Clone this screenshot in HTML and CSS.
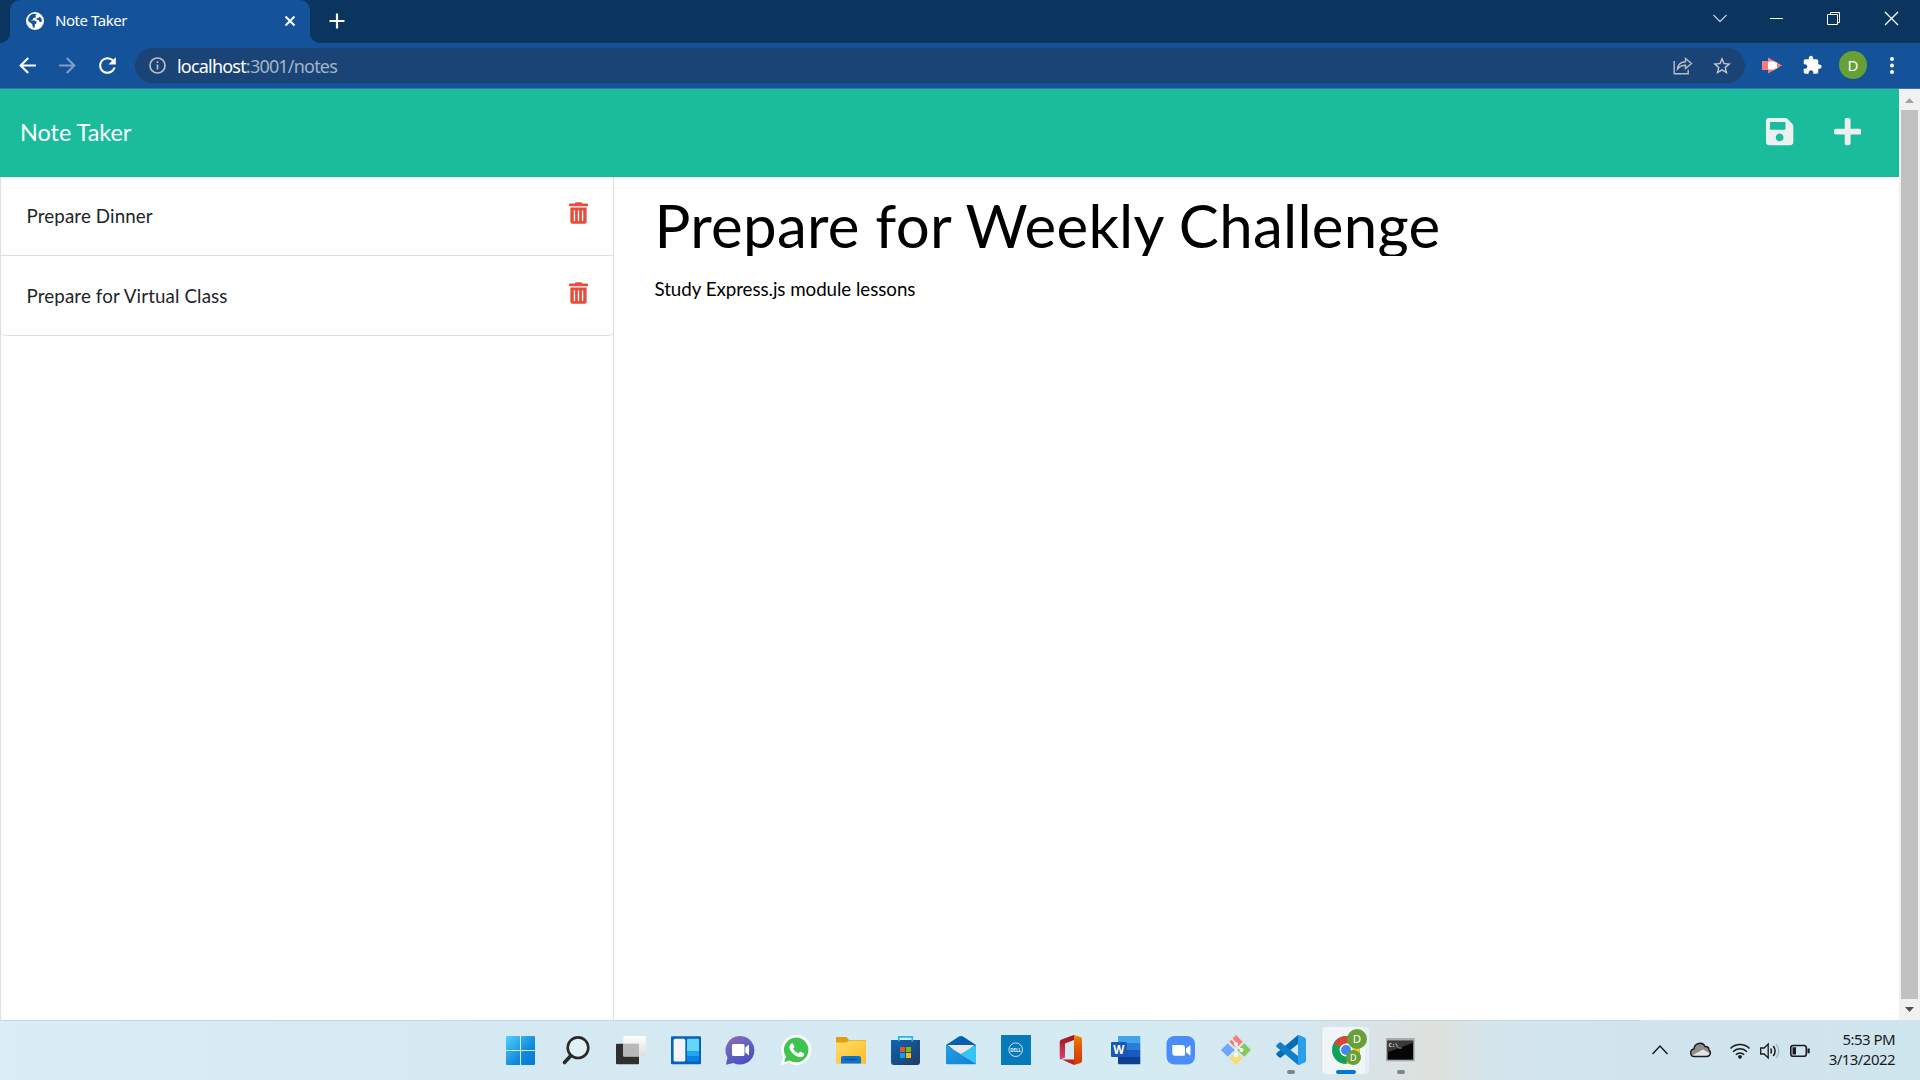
FILE: index.html
```html
<!DOCTYPE html>
<html lang="en">
<head>
<meta charset="utf-8">
<title>Note Taker</title>
<link rel="stylesheet" href="styles.css">
</head>
<body>
<header class="tabstrip">
  <div class="tab-edge"></div>
  <div class="tab">
    <svg class="globe" viewBox="0 0 18 18"><circle cx="9" cy="9" r="9" fill="#fff"/><path d="M7.6 1.8 11 2.2 9.4 3.6 10 5.4 7.3 6 7 7.6 4.6 8.4 8.6 8.6 10.6 9.8 10.3 11.6 8.8 12.6 8.6 15.8 6.8 15.4 6.4 12.8 5.4 11.4 2.2 8.9C2 5.4 4.4 2.4 7.6 1.8ZM13.8 4.4l2 3-.4 2.8-1.8-.4-1.2-1.7-2.1-.6.6-1.4 1.9-.3Z" fill="#14539a"/></svg>
    <span class="tab-title">Note Taker</span>
    <svg class="tab-close" viewBox="0 0 12 12"><path d="M1.5 1.5l9 9M10.5 1.5l-9 9" stroke="#fff" stroke-width="2"/></svg>
  </div>
  <div class="tab-edge tab-edge-right"></div>
  <svg class="new-tab" viewBox="0 0 16 16"><path d="M8 .5v15M.5 8h15" stroke="#fff" stroke-width="2.2"/></svg>
  <svg class="window-controls" viewBox="0 0 207 43" fill="none" stroke="#fff" stroke-width="1"><path d="M.5 15l6.500 6.500 6.500-6.500" stroke="#b9c8da" stroke-width="1.300"/><path d="M57 18.500h13"/><path d="M114.500 14.500h10v10h-10zM117.500 14.500v-2h9v10h-2"/><path d="M172 12l13 13M185 12l-13 13" stroke-width="1.300"/></svg>
</header>
<div class="toolbar">
  <svg class="nav-btn" viewBox="0 0 24 24"><path d="M20 11H7.830l5.590-5.590L12 4l-8 8 8 8 1.410-1.410L7.830 13H20z"/></svg>
  <svg class="nav-btn dim" viewBox="0 0 24 24"><path d="M4 11h12.170l-5.590-5.590L12 4l8 8-8 8-1.410-1.410L16.170 13H4z"/></svg>
  <svg class="nav-btn" viewBox="0 0 24 24"><path d="M17.650 6.350C16.200 4.900 14.210 4 12 4c-4.420 0-7.990 3.580-7.990 8s3.570 8 7.990 8c3.730 0 6.840-2.550 7.730-6h-2.080c-.82 2.330-3.040 4-5.650 4-3.310 0-6-2.690-6-6s2.690-6 6-6c1.660 0 3.140.690 4.220 1.780L13 11h7V4l-2.350 2.350z"/></svg>
  <div class="omnibox">
    <svg class="info" viewBox="0 0 17 17" fill="none" stroke="#b9bcc0" stroke-width="1.700"><circle cx="8.500" cy="8.500" r="7.500"/><path d="M8.500 7.500v5M8.500 4.300v1.800"/></svg>
    <span class="url">localhost<span class="url-path">:3001/notes</span></span>
    <svg class="share" viewBox="0 0 20 18" fill="none" stroke="#b9bec6" stroke-width="1.400"><path d="M1.200 4v12.800h14v-4"/><path d="M4.500 12C5 7.500 8 5 12.500 4.800V1.500L18.500 6.500 12.500 11.500V8.300C9 8.300 6.500 9.500 4.500 12Z"/></svg>
    <svg class="star" viewBox="2 2 20 19"><path fill="#c3c5c9" d="M22 9.240l-7.190-.620L12 2 9.190 8.630 2 9.240l5.460 4.730L5.820 21 12 17.270 18.180 21l-1.630-7.030L22 9.240zM12 15.400l-3.760 2.270 1-4.280-3.320-2.880 4.380-.380L12 6.100l1.710 4.040 4.380.380-3.320 2.880 1 4.280L12 15.400z"/></svg>
  </div>
  <svg class="ext" viewBox="0 0 20 17"><path d="M0 4h6V.500L20 8.500 6 16.500V13H0z" fill="#fb7a7c"/><rect x="6" y="4.500" width="7.500" height="8" rx="1" fill="#fff"/><path d="M11 8.500l4-3.500v7z" fill="#fff"/></svg>
  <svg class="puzzle" viewBox="0 0 24 24"><path fill="#fff" d="M20.500 11H19V7c0-1.100-.9-2-2-2h-4V3.500C13 2.120 11.880 1 10.500 1S8 2.120 8 3.500V5H4c-1.100 0-1.990.9-1.990 2v3.800H3.500c1.490 0 2.700 1.210 2.700 2.700s-1.210 2.700-2.700 2.700H2V20c0 1.100.9 2 2 2h3.800v-1.500c0-1.490 1.210-2.700 2.700-2.700s2.700 1.210 2.700 2.700V22H17c1.100 0 2-.9 2-2v-4h1.500c1.380 0 2.500-1.120 2.500-2.500S21.880 11 20.500 11z"/></svg>
  <div class="avatar">D</div>
  <svg class="menu" viewBox="0 0 4 17" fill="#fff"><circle cx="2" cy="2" r="2"/><circle cx="2" cy="8.500" r="2"/><circle cx="2" cy="15" r="2"/></svg>
</div>
<div class="viewport">
  <div class="page">
    <nav class="navbar">
      <span class="brand">Note Taker</span>
      <svg class="nav-icon" viewBox="0 0 448 512"><path d="M433.941 129.941l-83.882-83.882A48 48 0 0 0 316.118 32H48C21.490 32 0 53.490 0 80v352c0 26.510 21.490 48 48 48h352c26.510 0 48-21.490 48-48V163.882a48 48 0 0 0-14.059-33.941zM224 416c-35.346 0-64-28.654-64-64s28.654-64 64-64 64 28.654 64 64-28.654 64-64 64zm96-304.520V212c0 6.627-5.373 12-12 12H76c-6.627 0-12-5.373-12-12V108c0-6.627 5.373-12 12-12h228.520c3.183 0 6.235 1.264 8.485 3.515l3.480 3.480A11.996 11.996 0 0 1 320 111.480z"/></svg>
      <svg class="nav-icon" viewBox="0 0 448 512"><path d="M416 208H272V64c0-17.670-14.330-32-32-32h-32c-17.670 0-32 14.330-32 32v144H32c-17.670 0-32 14.330-32 32v32c0 17.670 14.330 32 32 32h144v144c0 17.670 14.330 32 32 32h32c17.670 0 32-14.330 32-32V304h144c17.670 0 32-14.330 32-32v-32c0-17.670-14.330-32-32-32z"/></svg>
    </nav>
    <main class="content">
      <aside class="notes">
        <ul class="note-list">
          <li class="note"><span class="note-title">Prepare Dinner</span><svg class="trash" viewBox="0 0 448 512"><path d="M32 464a48 48 0 0 0 48 48h288a48 48 0 0 0 48-48V128H32zm272-256a16 16 0 0 1 32 0v224a16 16 0 0 1-32 0zm-96 0a16 16 0 0 1 32 0v224a16 16 0 0 1-32 0zm-96 0a16 16 0 0 1 32 0v224a16 16 0 0 1-32 0zM432 32H312l-9.400-18.700A24 24 0 0 0 281.100 0H166.800a23.720 23.720 0 0 0-21.400 13.300L136 32H16A16 16 0 0 0 0 48v32a16 16 0 0 0 16 16h416a16 16 0 0 0 16-16V48a16 16 0 0 0-16-16z"/></svg></li>
          <li class="note"><span class="note-title">Prepare for Virtual Class</span><svg class="trash" viewBox="0 0 448 512"><path d="M32 464a48 48 0 0 0 48 48h288a48 48 0 0 0 48-48V128H32zm272-256a16 16 0 0 1 32 0v224a16 16 0 0 1-32 0zm-96 0a16 16 0 0 1 32 0v224a16 16 0 0 1-32 0zm-96 0a16 16 0 0 1 32 0v224a16 16 0 0 1-32 0zM432 32H312l-9.400-18.700A24 24 0 0 0 281.100 0H166.800a23.720 23.720 0 0 0-21.400 13.300L136 32H16A16 16 0 0 0 0 48v32a16 16 0 0 0 16 16h416a16 16 0 0 0 16-16V48a16 16 0 0 0-16-16z"/></svg></li>
        </ul>
      </aside>
      <section class="editor">
        <div class="editor-title">Prepare for Weekly Challenge</div>
        <div class="editor-text">Study Express.js module lessons</div>
      </section>
    </main>
  </div>
  <div class="scrollbar">
    <svg class="sb-arrow" viewBox="0 0 21 21"><path d="M6 14h9l-4.500-5z" fill="#a3a3a3"/></svg>
    <div class="thumb"></div>
    <svg class="sb-arrow" viewBox="0 0 21 21"><path d="M6 8h9l-4.500 5z" fill="#505050"/></svg>
  </div>
</div>
<footer class="taskbar">
  <div class="apps">
    <svg class="app" viewBox="0 0 55 59"><defs><linearGradient id="win" x1="13" y1="15" x2="42" y2="44" gradientUnits="userSpaceOnUse"><stop offset="0" stop-color="#4fd3fd"/><stop offset=".6" stop-color="#128ade"/><stop offset="1" stop-color="#0078d4"/></linearGradient></defs><path fill="url(#win)" d="M14 15h13v14H13V16q0-1 1-1zM28 15h13q1 0 1 1v13H28zM13 30h14v14H14q-1 0-1-1zM28 30h14v13q0 1-1 1H28z"/></svg>
    <svg class="app" viewBox="0 0 55 59" fill="none" stroke="#2b2a29"><circle cx="30" cy="26.700" r="10.300" fill="#dff0f7" stroke-width="2.600"/><path d="M22.500 35 16.500 41.500" stroke-width="3.600" stroke-linecap="round"/></svg>
    <svg class="app" viewBox="0 0 55 59"><defs><linearGradient id="tv" x1="0" y1="0" x2="0" y2="1"><stop offset="0" stop-color="#fff"/><stop offset="1" stop-color="#ddd"/></linearGradient></defs><rect x="13" y="22.700" width="23" height="20.600" rx="1" fill="#2f2f2e"/><rect x="20.300" y="15" width="22.500" height="20.500" rx="1" fill="url(#tv)"/><path d="M20.300 22.700H36v12.800H20.300z" fill="#b9b9b9"/></svg>
    <svg class="app" viewBox="0 0 55 59"><rect x="13" y="15.300" width="30" height="28" rx="1" fill="#0a62b8"/><rect x="15.600" y="17.700" width="11.700" height="22.800" rx="1.500" fill="#f4f4f6"/><path d="M29 19q0-1.300 1.300-1.300h9.400q1.300 0 1.300 1.300v11.400H29z" fill="#66d6fb"/><path d="M29 30.400h12V35H29z" fill="#1fa5f5"/><path d="M29 35h12v4.300q0 1.200-1.300 1.200h-9.400Q29 40.500 29 39.300z" fill="#0884e8"/></svg>
    <svg class="app" viewBox="0 0 55 59"><defs><linearGradient id="chat" x1="0" y1="0" x2=".6" y2="1"><stop offset="0" stop-color="#9a6aa8"/><stop offset=".4" stop-color="#6c66bd"/><stop offset="1" stop-color="#4c4fc0"/></linearGradient></defs><path fill="url(#chat)" d="M27.500 15a14.300 14.300 0 1 1-7 27L13 43.700l1.500-7.200A14.300 14.300 0 0 1 27.500 15z"/><rect x="19" y="23" width="12.500" height="12" rx="1.500" fill="#fff"/><path d="M32.300 26.500 36 23.500v11l-3.700-3z" fill="#fff"/></svg>
    <svg class="app" viewBox="0 0 55 59"><path fill="#fff" d="M28.100 14a15 15 0 1 1-7.200 28L13 44l2.200-7.800A15 15 0 0 1 28.100 14z"/><path fill="#40c351" d="M28.100 16.500a12.400 12.400 0 1 1-6.300 23.100L16.300 41l1.600-5.400A12.400 12.400 0 0 1 28.100 16.500z"/><path fill="#fff" d="M23.300 22.500c1-.5 1.700-.2 2 .7l1 2.500c.2.700-.3 1.400-1.200 2.100 1.300 2.300 3 3.700 5.500 4.700 1-1.300 1.500-2 2.500-1.500l2.500 1.300c1 .7.300 2.500-.6 3.200-2.100 1.600-4.900.6-7.600-.9-2.400-1.400-4.500-4-5.600-6.300-.8-2-.3-4.600 1.500-5.800z"/></svg>
    <svg class="app" viewBox="0 0 55 59"><defs><linearGradient id="fold" x1="0" y1="0" x2="1" y2="1"><stop offset="0" stop-color="#ffdc6b"/><stop offset="1" stop-color="#fbbd26"/></linearGradient></defs><path d="M13 17q0-1 1-1h9.500l2.500 3h16q1 0 1 1v5H13z" fill="#dfa00c"/><path d="M13 21.500h10.500l2.500-2h17V42q0 .8-1 .8H14q-1 0-1-.8z" fill="url(#fold)"/><path d="M18 42.500V37q0-2 2-2h16q2 0 2 2v5.500z" fill="#0b74cf"/><path d="M21.500 38.500h13" stroke="#0a4c95" stroke-width="1.300"/></svg>
    <svg class="app" viewBox="0 0 55 59"><defs><linearGradient id="store" x1="0" y1="0" x2="1" y2="1"><stop offset="0" stop-color="#0a66b5"/><stop offset="1" stop-color="#233a63"/></linearGradient></defs><path d="M13 19h29v22q0 3-3 3H16q-3 0-3-3z" fill="url(#store)"/><path d="M20.800 20.500v-4.700h13.500v4.700" fill="none" stroke="#22b7ee" stroke-width="1.700"/><path d="M22 26h5v5h-5z" fill="#f1511b"/><path d="M28 26h5v5h-5z" fill="#80bb01"/><path d="M22 32h5v5h-5z" fill="#02a5ee"/><path d="M28 32h5v5h-5z" fill="#fdb903"/></svg>
    <svg class="app" viewBox="0 0 55 59"><defs><linearGradient id="mail" x1="0" y1="0" x2="1" y2="1"><stop offset="0" stop-color="#1f9fe6"/><stop offset="1" stop-color="#1380d6"/></linearGradient></defs><path d="M13 24 26 15.500q2-1 4 0L43 24v4H13z" fill="#075fb2"/><path d="M14.500 24h27L29 35z" fill="#ebe9ea"/><path d="M13 24l30 18.500q0 .8-1 .8H14q-1 0-1-.8z" fill="url(#mail)"/><path d="M43 24v18.500L27.500 33z" fill="#32c5f3"/></svg>
    <svg class="app" viewBox="0 0 55 59"><path d="M13 14h30v30H13z" fill="#0679b8"/><circle cx="27.700" cy="28.700" r="6.800" fill="none" stroke="#cfe6f2" stroke-width="1"/><text x="27.700" y="30.500" text-anchor="middle" class="dell">DELL</text></svg>
    <svg class="app" viewBox="0 0 55 59"><defs><linearGradient id="off" x1="0" y1="0" x2="0" y2="1"><stop offset="0" stop-color="#991117"/><stop offset=".6" stop-color="#c83050"/><stop offset="1" stop-color="#d7406a"/></linearGradient><linearGradient id="off2" x1="0" y1="0" x2="0" y2="1"><stop offset="0" stop-color="#f08a00"/><stop offset=".4" stop-color="#e3560b"/><stop offset="1" stop-color="#cf3b04"/></linearGradient></defs><path d="M31 14 18.500 18.600q-1.800.8-1.800 2.700V37q0 2 1.800 1.300l3.500-2V22.500L31 19z" fill="url(#off)"/><path d="M31 14l6.500 2q1.500.5 1.500 2v22q0 1.500-1.500 2L31 44z" fill="url(#off2)"/><path d="M19 38.500h12V44z" fill="#c51f28"/></svg>
    <svg class="app" viewBox="0 0 55 59"><path d="M20 22v-6q0-1 1-1h20.300q1 0 1 1v6z" fill="#41a5ee"/><path d="M20 22h22.300v7H20z" fill="#2b7cd3"/><path d="M20 29h22.300v7H20z" fill="#185abd"/><path d="M20 36h22.300v6.300q0 1-1 1H21q-1 0-1-1z" fill="#103f91"/><rect x="13" y="21" width="15.700" height="15" rx="1" fill="#1857b8"/><text x="20.800" y="32.700" text-anchor="middle" class="word">W</text></svg>
    <svg class="app" viewBox="0 0 55 59"><rect x="13.500" y="15" width="28.500" height="28.500" rx="8" fill="#4a8df8"/><path d="M19.300 24.700q0-.7.7-.7h9q3 0 3 3v7q0 .7-.7.7H22q-2.700 0-2.700-3zM33 27.500l3.800-3q.7-.3.7.5v8.800q0 .8-.7.5L33 31.300z" fill="#fff"/></svg>
    <svg class="app" viewBox="0 0 55 59"><path d="M28 14l6.700 6.700-6.700 6.700-6.700-6.700z" fill="#f97b78"/><path d="M36.300 22.300 43 29l-6.700 6.700-7-6.700z" fill="#81cc57"/><path d="M28 30.600l6.700 6.700L28 44l-6.700-6.700z" fill="#fadc74"/><path d="M19.700 22.300l7 6.700-7 6.700L13 29z" fill="#73a5f8"/><path d="M23.500 17.500l4.500 5V34M28 24l5.500 5" fill="none" stroke="#f3f2ef" stroke-width="1.500"/><circle cx="28" cy="23" r="2" fill="#fff"/><circle cx="28" cy="34" r="2.200" fill="#fff"/><circle cx="33.500" cy="29" r="2" fill="#fff"/></svg>
    <svg class="app" viewBox="0 0 55 59"><path d="M35 14v9L18 36.500q-.8.600-1.600 0L13.600 34q-1-1 0-2z" fill="#0a6cb5"/><path d="M13.600 26q-1-1 0-2l2.800-2.500q.8-.6 1.600 0L35 35v9z" fill="#0f7fca"/><path d="M35 14.200q.7-.4 1.600 0l5.400 2.500q1 .5 1 1.600v21.400q0 1.100-1 1.600l-5.400 2.500q-.9.400-1.600 0z" fill="#2b9fee"/><rect x="24" y="49" width="8" height="4" rx="2" fill="#7f8589"/></svg>
    <svg class="app" viewBox="0 0 55 59"><rect x="4" y="5.500" width="48" height="48" rx="4" fill="#e5eff5" stroke="#cfdce3" stroke-width=".6"/><rect x="4" y="5.500" width="44" height="48" rx="4" fill="#f0f5fa" stroke="#d8e3e9" stroke-width=".6"/><circle cx="28" cy="29" r="14" fill="#15a05a"/><path d="M28 29 15.900 22A14 14 0 0 1 40.100 22z" fill="#db4437"/><path d="M28 22h12.100A14 14 0 0 1 28 43l6-10.500z" fill="#fbc62d"/><circle cx="28" cy="29" r="6.400" fill="#fff"/><circle cx="28" cy="29" r="5" fill="#4285f4"/><circle cx="39" cy="18" r="10" fill="#67a03a"/><text x="39" y="22" text-anchor="middle" class="badge">D</text><circle cx="35.500" cy="36.500" r="7.500" fill="#67a03a"/><text x="35.300" y="40" text-anchor="middle" class="badge small">D</text><rect x="18" y="49" width="20" height="4" rx="2" fill="#0078d4"/></svg>
    <svg class="app" viewBox="0 0 55 59"><path d="M13 17h28.700v23.300H13z" fill="#a7abad"/><path d="M14.500 19.700h25.700v19H14.500z" fill="#060606"/><path d="M14.500 19.700h25.700v2L18 30l-3.500 1z" fill="#3a3a3a"/><text x="15.500" y="25.500" class="prompt">C:\_</text><rect x="24" y="49" width="8" height="4" rx="2" fill="#7f8589"/></svg>
  </div>
  <svg class="tray" viewBox="0 0 160 24" fill="none" stroke="#1b1b1b"><path d="M2.500 16l7.500-8 7.500 8" stroke-width="1.500"/><path d="M45 18.500c-5.500 0-6-7-1-7.500 0-6.500 9-7.500 11-2.500 3 0 4 2 4 4 2.500 2 1 6-2.500 6z" fill="#8e8e8e" stroke="none"/><path d="M42 17.500l11-6 7 4c-.5 2-1.500 3-3.500 3H45z" fill="#e3e3e3" stroke="none"/><path d="M44.500 18.500c-5 0-5-7-.5-7.500.5-6.500 9-7.500 11-2.500 3 0 4 2 4 3.500 2.500 2 1.500 6.500-2.500 6.500z" stroke-width="1.400"/><path d="M80.500 10.500a13.400 13.400 0 0 1 19 0M83 13.700a10 10 0 0 1 14 0M85.800 16.700a6 6 0 0 1 8.400 0" stroke-width="1.500"/><circle cx="90" cy="18.800" r="1.900" fill="#1b1b1b" stroke="none"/><path d="M110.700 10h3.500l4-4v14l-4-4h-3.500z" stroke-width="1.300"/><path d="M120.700 10.500q1.600 2.500 0 5M123.300 8q3.600 5 0 10" stroke-width="1.500"/><path d="M126 6q5.500 7 0 14" stroke="#a6b4ba" stroke-width="1.300"/><rect x="140.800" y="7.500" width="15.500" height="10.700" rx="2.300" stroke-width="1.600"/><path d="M142.500 9.300h3.500v7.200h-3.500zM157.500 10.500h2.200v4.700h-2.200z" fill="#1b1b1b" stroke="none"/></svg>
  <div class="clock"><span class="time">5:53 PM</span><span class="date">3/13/2022</span></div>
</footer>
</body>
</html>
```
FILE: styles.css
```css
* { box-sizing: border-box; }
body {
  margin: 0;
  width: 1920px;
  height: 1080px;
  overflow: hidden;
  display: flex;
  flex-direction: column;
  background: #fff;
  font-family: "Noto Sans", "Open Sans", sans-serif;
}
svg { display: block; flex: none; }

/* Browser chrome */
.tabstrip { display: flex; height: 43px; background: #0b345f; color: #fff; }
.tab-edge { width: 10px; background: #14539a; }
.tab-edge::before { content: ""; display: block; height: 100%; background: #0b345f; border-bottom-right-radius: 10px; }
.tab-edge-right::before { border-radius: 0 0 0 10px; }
.tab { display: flex; align-items: center; width: 300px; padding: 0 14px 2px 16px; background: #14539a; border-radius: 10px 10px 0 0; }
.globe { width: 18px; height: 18px; }
.tab-title { margin-left: 11px; padding-bottom: 2px; font-size: 15px; letter-spacing: -.450px; line-height: 20px; flex: 1; }
.tab-close { width: 12px; height: 12px; }
.new-tab { width: 16px; height: 16px; margin: 13px 0 0 9px; }
.window-controls { width: 207px; height: 43px; margin-left: auto; }
.toolbar { display: flex; align-items: center; height: 46px; padding: 0 25px 0 15px; background: #14539a; border-bottom: 1px solid #3d70ac; }
.nav-btn { width: 25px; height: 25px; margin: 0 15px 1px 0; fill: #fff; }
.nav-btn.dim { fill: #7d9fc9; }
.omnibox { display: flex; align-items: center; width: 1610px; height: 35px; padding: 0 14px; border-radius: 18px; background: #194475; }
.info { width: 17px; height: 17px; }
.url { margin-left: 11px; flex: 1; color: #fff; font-size: 18px; line-height: 24px; letter-spacing: -.800px; }
.url-path { color: #a3b4c8; }
.share { width: 20px; height: 18px; margin-right: 20px; }
.star { width: 18px; height: 17px; }
.ext { width: 20px; height: 17px; margin-left: 17px; }
.puzzle { width: 20.500px; height: 20.500px; margin: 0 0 1px 20px; }
.avatar { width: 28px; height: 28px; margin: 0 23px 1px 16.500px; border-radius: 50%; background: #67a037; color: #fff; font-size: 15px; line-height: 28px; text-align: center; }
.menu { width: 4px; height: 17px; }

/* Note Taker page */
.viewport { display: flex; height: 931px; font-family: Lato, sans-serif; }
.page { display: flex; flex-direction: column; width: 1899px; }
.navbar { display: flex; align-items: center; height: 88px; padding: 0 38px 2px 20px; background: #1abc9c; color: #fff; }
.brand { flex: 1; font-size: 23.400px; line-height: 36px; }
.nav-icon { width: 27.300px; height: 31.250px; margin-left: 40px; fill: #ecf0f1; }
.content { display: flex; flex: 1; }
.notes { width: 614px; border: solid #dfdfdf; border-width: 0 1px; }
.note-list { margin: 0 -1px; padding: 0; list-style: none; }
.note { display: flex; align-items: flex-start; justify-content: space-between; height: 80px; padding: 25px 25px 0; border: solid #dfdfdf; border-width: 0 1px 1px; color: #212529; }
.note:first-child { height: 79px; padding-top: 24px; }
.note:last-child { border-radius: 0 0 5px 5px; }
.note-title { margin-top: 1px; padding-left: .500px; font-size: 18.750px; line-height: 28px; letter-spacing: .120px; }
.trash { width: 19px; height: 22px; margin-top: 1px; fill: #e74c3c; }
.editor { flex: 1; padding: 19px 40.500px; color: #000; }
.editor-title { height: 60px; overflow: hidden; font-size: 60px; line-height: 58px; letter-spacing: .250px; }
.editor-text { margin-top: 19px; font-size: 18.750px; line-height: 28px; letter-spacing: -.050px; }
.scrollbar { display: flex; flex-direction: column; width: 21px; background: #f1f1f1; }
.sb-arrow { width: 21px; height: 21px; }
.thumb { flex: 1; margin: 0 2px; background: #c1c1c1; }

/* Windows taskbar */
.taskbar {
  display: flex;
  align-items: center;
  height: 60px;
  padding: 1px 25px 0 493px;
  color: #1b1b1b;
  background:
    linear-gradient(#c4d8df, #c4d8df) 0 0 / 1640px 1px no-repeat,
    linear-gradient(90deg, #d9edf6 0%, #d5e9f3 30%, #d5ebf2 60%, #d5e7ef 68%, #dbe2e2 73%, #dde1dd 75%, #d4e5ec 77.500%, #d1e4ee 86%, #cfe5ed 100%);
}
.apps { display: flex; }
.app { width: 55px; height: 59px; }
.dell { font: bold 4.500px "Noto Sans", sans-serif; fill: #e6f3fa; }
.word { font: bold 11.500px "Noto Sans", sans-serif; fill: #fff; }
.badge { font: 11.500px "Noto Sans", sans-serif; fill: #fff; }
.badge.small { font-size: 9px; }
.prompt { font: bold 5.500px "DejaVu Sans Mono", monospace; fill: #e4e4e4; }
.tray { width: 160px; height: 24px; margin: 0 0 1px 222px; }
.clock { display: flex; flex-direction: column; align-items: flex-end; flex: 1; font-size: 15px; line-height: 20px; letter-spacing: -.550px; padding-bottom: 4px; }
```
